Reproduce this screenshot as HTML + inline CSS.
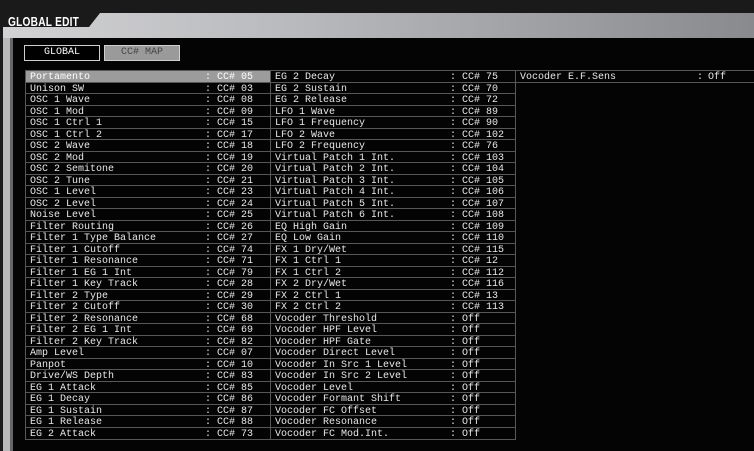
<!DOCTYPE html>
<html><head><meta charset="utf-8"><style>
*{margin:0;padding:0;box-sizing:border-box}
body{width:754px;height:451px;overflow:hidden;background:#1a1a1a;position:relative;font-family:"Liberation Mono",monospace}
.band{position:absolute;left:0;top:13px;width:754px;height:25px;background:linear-gradient(90deg,#d2d2d4,#b8b9bc 40%,#898a8d);clip-path:polygon(100px 0,754px 0,754px 25px,3px 25px,3px 14px,89px 14px)}
.lb1{position:absolute;left:3px;top:38px;width:7px;height:413px;background:#b9b9bb}
.lb2{position:absolute;left:10px;top:38px;width:3px;height:413px;background:#666}
.panel{position:absolute;left:13px;top:38px;right:0;bottom:0;background:#040404}
.title{position:absolute;left:8px;top:14px;color:#fff;font:bold 13px "Liberation Sans",sans-serif;transform:scaleX(.78);transform-origin:left top;letter-spacing:.3px}
.btn{position:absolute;top:45px;height:16px;width:76px;font-size:10px;line-height:14px;text-align:center}
.b1{left:24px;border:1px solid #cfcfcf;color:#fff;background:#000}
.b2{left:104px;border:1px solid #cfcfcf;color:#444;background:#9a9a9a}
.col{position:absolute;top:70px;border:1px solid #575757;border-bottom:none}
.r{height:11.53px;border-bottom:1px solid #575757;position:relative;color:#e8e8e8;font-size:10px;line-height:11px;white-space:pre}
.r span{position:absolute;top:1px}
.hl{background:#9c9c9c;color:#fff}
</style></head><body>
<div class="band"></div>
<div class="lb1"></div><div class="lb2"></div>
<div class="panel"></div>
<div class="title">GLOBAL EDIT</div>
<div class="btn b1">GLOBAL</div>
<div class="btn b2">CC# MAP</div>
<div class="col" style="left:25px;width:246px" id="c1"></div>
<div class="col" style="left:270px;width:246px" id="c2"></div>
<div class="col" style="left:515px;width:245px" id="c3"></div>
<script>
var c1=[["Portamento","CC# 05"],["Unison SW","CC# 03"],["OSC 1 Wave","CC# 08"],["OSC 1 Mod","CC# 09"],["OSC 1 Ctrl 1","CC# 15"],["OSC 1 Ctrl 2","CC# 17"],["OSC 2 Wave","CC# 18"],["OSC 2 Mod","CC# 19"],["OSC 2 Semitone","CC# 20"],["OSC 2 Tune","CC# 21"],["OSC 1 Level","CC# 23"],["OSC 2 Level","CC# 24"],["Noise Level","CC# 25"],["Filter Routing","CC# 26"],["Filter 1 Type Balance","CC# 27"],["Filter 1 Cutoff","CC# 74"],["Filter 1 Resonance","CC# 71"],["Filter 1 EG 1 Int","CC# 79"],["Filter 1 Key Track","CC# 28"],["Filter 2 Type","CC# 29"],["Filter 2 Cutoff","CC# 30"],["Filter 2 Resonance","CC# 68"],["Filter 2 EG 1 Int","CC# 69"],["Filter 2 Key Track","CC# 82"],["Amp Level","CC# 07"],["Panpot","CC# 10"],["Drive/WS Depth","CC# 83"],["EG 1 Attack","CC# 85"],["EG 1 Decay","CC# 86"],["EG 1 Sustain","CC# 87"],["EG 1 Release","CC# 88"],["EG 2 Attack","CC# 73"]];
var c2=[["EG 2 Decay","CC# 75"],["EG 2 Sustain","CC# 70"],["EG 2 Release","CC# 72"],["LFO 1 Wave","CC# 89"],["LFO 1 Frequency","CC# 90"],["LFO 2 Wave","CC# 102"],["LFO 2 Frequency","CC# 76"],["Virtual Patch 1 Int.","CC# 103"],["Virtual Patch 2 Int.","CC# 104"],["Virtual Patch 3 Int.","CC# 105"],["Virtual Patch 4 Int.","CC# 106"],["Virtual Patch 5 Int.","CC# 107"],["Virtual Patch 6 Int.","CC# 108"],["EQ High Gain","CC# 109"],["EQ Low Gain","CC# 110"],["FX 1 Dry/Wet","CC# 115"],["FX 1 Ctrl 1","CC# 12"],["FX 1 Ctrl 2","CC# 112"],["FX 2 Dry/Wet","CC# 116"],["FX 2 Ctrl 1","CC# 13"],["FX 2 Ctrl 2","CC# 113"],["Vocoder Threshold","Off"],["Vocoder HPF Level","Off"],["Vocoder HPF Gate","Off"],["Vocoder Direct Level","Off"],["Vocoder In Src 1 Level","Off"],["Vocoder In Src 2 Level","Off"],["Vocoder Level","Off"],["Vocoder Formant Shift","Off"],["Vocoder FC Offset","Off"],["Vocoder Resonance","Off"],["Vocoder FC Mod.Int.","Off"]];
var c3=[["Vocoder E.F.Sens","Off"]];
function fill(id,d,cx,vx){var e=document.getElementById(id),h="";d.forEach(function(x,i){h+='<div class="r'+(id=="c1"&&i==0?' hl':'')+'"><span style="left:4px">'+x[0]+'</span><span style="left:'+cx+'px">:</span><span style="left:'+vx+'px">'+x[1]+'</span></div>'});e.innerHTML=h}
fill("c1",c1,179,191);fill("c2",c2,179,191);fill("c3",c3,181,192);
</script>
</body></html>
